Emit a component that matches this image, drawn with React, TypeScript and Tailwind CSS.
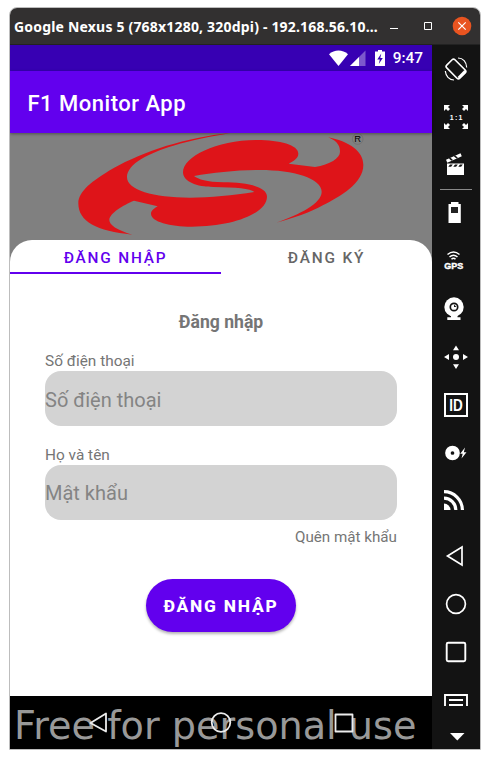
import type { ReactNode } from "react";

function Cell({ children, label }: { children: ReactNode; label: string }) {
  return (
    <button aria-label={label} className="block h-12 w-12 shrink-0">
      <svg viewBox="0 0 48 48" className="block h-12 w-12" fill="#fff">
        {children}
      </svg>
    </button>
  );
}

function TitleBar() {
  return (
    <header className="flex h-[37px] shrink-0 items-center border-b border-[#222] bg-[#323030] pl-1 text-white">
      <h1 className="w-[371px] whitespace-nowrap font-['Noto_Sans',sans-serif] text-[14px] font-bold tracking-[0.19px]">
        Google Nexus 5 (768x1280, 320dpi) - 192.168.56.10…
      </h1>
      <svg viewBox="0 0 95 36" className="h-9 w-[95px]" fill="none" stroke="#fff">
        <path d="M5 20.5h8M39.5 14.5h7v7h-7z" />
        <circle cx="77" cy="18" r="9.3" fill="#e95420" stroke="none" />
        <path d="M73.3 14.3l7.4 7.4M80.7 14.3l-7.4 7.4" strokeWidth="1.2" />
      </svg>
    </header>
  );
}

function StatusBar() {
  return (
    <div className="flex h-[26px] items-center justify-end bg-[#3700b3] pr-[9px] text-white">
      <svg viewBox="0 0 60 26" className="h-[26px] w-[60px]" fill="#fff">
        <path d="M0 9.2C5.500 4.300 13.500 4.300 19 9.200L9.500 21z" />
        <path d="M36.500 5.500V21H21z" opacity=".35" />
        <path d="M30 12V21H21z" />
        <path d="M49 5h4v1.500h3V21H46V6.500h3z" />
        <path d="M52.300 8.500l-4 6h2.500l-1 4.500 4-6h-2.500z" fill="#3700b3" />
      </svg>
      <span className="ml-1 text-[15.4px] font-medium leading-[26px]">9:47</span>
    </div>
  );
}

function Logo() {
  return (
    <svg viewBox="-150 24 1266 321" className="block h-[107px] w-[422px]">
      <path
        fill="#de1419"
        d="M510 25C380 36 250 80 160 130C95 168 55 200 55 235C55 290 110 318 217 329C170 315 148 300 148 285C148 265 190 240 222 227L293 244C283 250 273 257 273 266C273 290 330 305 395 305C520 305 621 265 621 215C621 185 560 172 490 172C440 171 415 163 402 153C460 143 530 135 600 135C700 135 785 160 785 200C785 235 720 268 648 293C700 280 750 262 790 240C840 215 910 175 910 120C910 80 870 50 805 37C835 50 840 65 840 80C840 100 810 118 765 126L686 116C700 108 715 100 715 86C715 60 660 45 590 45C470 45 369 95 369 142C369 170 410 186 460 186C530 187 570 190 583 201C520 211 450 218 390 218C280 218 201 195 201 157C201 115 270 83 340 62C400 45 450 34 510 25Z"
      />
      <circle cx="893" cy="42" r="16" fill="none" stroke="#666" strokeWidth="1.500" />
      <text x="883" y="51.500" fontSize="28" fontFamily="Liberation Sans">R</text>
    </svg>
  );
}

function Field({ label, hint }: { label: string; hint: string }) {
  return (
    <label className="block">
      <span className="block h-[20px] text-[15.4px] leading-[21px] text-[#757575]">{label}</span>
      <input
        placeholder={hint}
        className="block h-[55px] w-full rounded-[16px] bg-[#d3d3d3] pt-[2px] text-[20px] text-[#222] placeholder:text-[#848484]"
      />
    </label>
  );
}

function NavBar() {
  return (
    <nav className="relative h-[53px] shrink-0 overflow-hidden bg-black">
      <p className="whitespace-nowrap pl-[4px] font-['DejaVu_Sans',sans-serif] text-[38.2px] leading-[60px] text-[#999]">
        Free for personal use
      </p>
      <svg viewBox="0 0 422 53" className="absolute inset-0" fill="none" stroke="#ececec" strokeWidth="1.8" strokeLinejoin="round">
        <path d="M80.500 27L96 17.500V35.500z" />
        <circle cx="211" cy="26.500" r="9.300" />
        <path d="M325.500 18.500h17v17h-17z" />
      </svg>
    </nav>
  );
}

function ToolRail() {
  return (
    <aside className="flex w-12 shrink-0 flex-col bg-[#131313]">
      <Cell label="Rotate">
        <g fill="none" stroke="#fff">
          <rect x="18.200" y="14.700" width="11.600" height="18.500" rx="2" transform="rotate(-45 24 24)" strokeWidth="1.600" />
          <path d="M26.500 32.800l6.800-6.800" strokeWidth="2.500" />
          <path d="M26 13c5 0 8.500 4 8.700 9.500M13.300 26c.5 5 3.700 9 8.700 9" strokeWidth="1.200" />
        </g>
      </Cell>
      <Cell label="Actual size">
        <path d="M12 12h6l-2 2 2 2-2 2-2-2-2 2zM36 12h-6l2 2-2 2 2 2 2-2 2 2zM12 36h6l-2-2 2-2-2-2-2 2-2-2zM36 36h-6l2-2-2-2 2-2 2 2 2-2z" />
        <text x="24.700" y="26.700" textAnchor="middle" fontSize="7" fontWeight="700" letterSpacing="1.200" fontFamily="Liberation Sans">1:1</text>
      </Cell>
      <Cell label="Screencast">
        <path d="M15 22.500h17V34H15zM14 18.700l14.500-6.500 1.300 3-14.500 6.500z" />
        <path d="M18 23.500l-1.700 2.300h2.800l1.700-2.300zM23 23.500l-1.700 2.300h2.800l1.700-2.300zM28 23.500l-1.700 2.300h2.800l1.700-2.300zM16.800 17.500l2.700 2.300 1.500-.7-2.500-2.300zM21.800 15.300l2.700 2.300 1.500-.7-2.500-2.300z" fill="#131313" />
      </Cell>
      <div className="mx-auto -mb-px h-px w-8 bg-[#888]" />
      <Cell label="Battery">
        <path d="M19 13h7.500v2h2.300v19H16.500V15H19z" />
        <path d="M19 18h7v6h-7z" fill="#222" />
      </Cell>
      <Cell label="GPS">
        <g fill="none" stroke="#fff" strokeWidth="1.500">
          <path d="M15.500 17.500q6-5 12 0M17.500 20q4-3.500 8 0M19.500 22.300q2-2 4 0" />
        </g>
        <text x="21.800" y="31.500" textAnchor="middle" fontSize="9" fontWeight="700" stroke="#fff" strokeWidth=".4" fontFamily="Liberation Sans">GPS</text>
      </Cell>
      <Cell label="Camera">
        <circle cx="22" cy="22" r="9.700" />
        <circle cx="22" cy="22" r="3.700" fill="none" stroke="#131313" strokeWidth="1.700" />
        <path d="M22 22v-2.500l2.500 2.500z" fill="#131313" />
        <path d="M19 30h6.500v2.300h3V35H15.300v-2.700H19z" />
      </Cell>
      <Cell label="Move">
        <circle cx="24" cy="24" r="3" />
        <path d="M24 12.500l3 4.800h-6zM24 36l3-4.800h-6zM12 24l5-3v6zM36 24l-5-3v6z" />
      </Cell>
      <Cell label="Identifiers">
        <path d="M13 13h22v22H13z" fill="none" stroke="#fff" strokeWidth="2" />
        <text x="24" y="29.700" textAnchor="middle" fontSize="16" fontWeight="700" fontFamily="Liberation Sans" textLength="13.500" lengthAdjust="spacingAndGlyphs">ID</text>
      </Cell>
      <Cell label="Disk">
        <circle cx="20.500" cy="24" r="4.600" fill="none" stroke="#fff" strokeWidth="5.500" />
        <path d="M33 18.500l-4.800 6.200h2.500L29.500 29.500l5-6.300h-2.700z" />
      </Cell>
      <Cell label="Network">
        <g fill="none" stroke="#fff" strokeWidth="3.200">
          <path d="M12 14.700A18.400 18.400 0 0 1 30.400 33M12 21.200A11.800 11.800 0 0 1 23.800 33" />
        </g>
        <path d="M12 26.500A6.500 6.500 0 0 1 18.500 33H12z" />
      </Cell>
      <div className="h-[7px]" />
      <Cell label="Back"><path d="M15.500 24L30 15V33z" fill="none" stroke="#fff" strokeWidth="1.700" /></Cell>
      <Cell label="Home"><circle cx="24" cy="24" r="9.400" fill="none" stroke="#fff" strokeWidth="1.700" /></Cell>
      <Cell label="Recent"><rect x="14.700" y="14.700" width="18.600" height="18.600" rx="1.500" fill="none" stroke="#fff" strokeWidth="1.900" /></Cell>
      <Cell label="Menu"><path d="M13 30V19h22v11M17 24h14M17 29h14" fill="none" stroke="#fff" strokeWidth="1.900" /></Cell>
      <svg viewBox="0 0 48 24" className="h-6 w-12" fill="#fff"><path d="M18 9h14.500L25.300 16.500z" /></svg>
    </aside>
  );
}

export default function App() {
  return (
    <div className="h-[759px] w-[490px] bg-white pl-[9px] pt-[7px] font-['Roboto',sans-serif]">
      <div className="flex h-[743px] w-[472px] flex-col overflow-hidden rounded-t-[8px] border border-[#bdbdbd]">
        <TitleBar />
        <div className="flex h-[704px] shrink-0">
          <main className="flex w-[422px] flex-col">
            <StatusBar />
            <div className="relative z-10 h-[62px] bg-[#6200ee] pl-[17.500px] text-[22px] font-medium leading-[65px] tracking-[0.5px] text-white shadow-[0_1px_3px_rgba(0,0,0,0.4)]">
              F1 Monitor App
            </div>
            <div className="bg-[#808080]">
              <Logo />
              <div className="h-[456px] rounded-t-[22px] bg-white">
                <div className="grid h-[34px] grid-cols-2 text-center text-[15.4px] font-medium leading-[36px] tracking-[1.8px]">
                  <div className="h-[34px] border-b-[2px] border-[#6200ee] text-[#6200ee]">ĐĂNG NHẬP</div>
                  <div className="text-[#666]">ĐĂNG KÝ</div>
                </div>
                <form className="px-[35px] pt-[36px] text-[#757575]">
                  <h2 className="h-[42px] text-center text-[17.6px] font-bold leading-[24px]">Đăng nhập</h2>
                  <div className="-mt-px flex flex-col gap-[18.500px]">
                    <Field label="Số điện thoại" hint="Số điện thoại" />
                    <Field label="Họ và tên" hint="Mật khẩu" />
                  </div>
                  <p className="mt-[7px] text-right text-[15.2px] leading-[20px]">Quên mật khẩu</p>
                  <button type="button" className="mx-auto mt-[32px] block h-[53px] w-[150px] whitespace-nowrap rounded-full bg-[#6200ee] pt-[2px] text-[17.4px] font-extrabold tracking-[1.75px] text-white shadow-[0_2px_3px_rgba(0,0,0,0.3)]">
                    ĐĂNG NHẬP
                  </button>
                </form>
              </div>
            </div>
            <NavBar />
          </main>
          <ToolRail />
        </div>
      </div>
    </div>
  );
}
